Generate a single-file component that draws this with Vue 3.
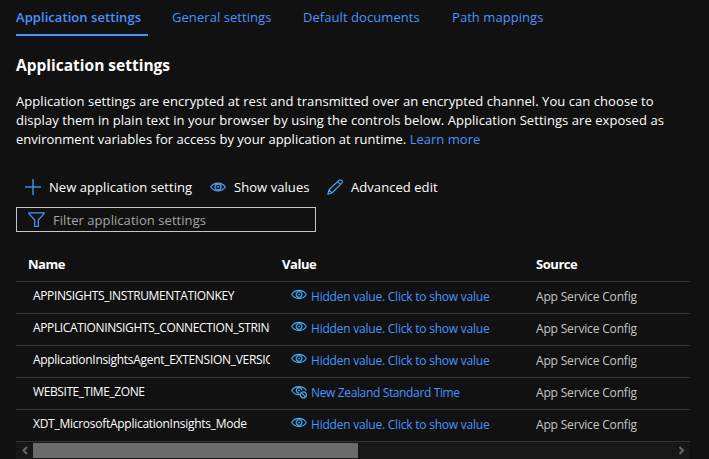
<script setup>
const tabs = [
  { label: 'Application settings', cls: 'tab-app', active: true },
  { label: 'General settings', cls: 'tab-general' },
  { label: 'Default documents', cls: 'tab-docs' },
  { label: 'Path mappings', cls: 'tab-path' },
]
const rows = [
  { name: 'APPINSIGHTS_INSTRUMENTATIONKEY', cls: 'n-key' },
  { name: 'APPLICATIONINSIGHTS_CONNECTION_STRING', cls: 'n-conn' },
  { name: 'ApplicationInsightsAgent_EXTENSION_VERSION', cls: 'n-agent' },
  { name: 'WEBSITE_TIME_ZONE', cls: 'n-zone', value: 'New Zealand Standard Time' },
  { name: 'XDT_MicrosoftApplicationInsights_Mode', cls: 'n-mode' },
]
</script>

<template>
  <main class="page">
    <nav class="tabs">
      <a v-for="t in tabs" :key="t.label" class="tab" :class="[t.cls, { active: t.active }]"><span>{{ t.label }}</span></a>
    </nav>
    <h1 class="title">Application settings</h1>
    <p class="intro">
      <span class="line">Application settings are encrypted at rest and transmitted over an encrypted channel. You can choose to</span>
      <span class="line">display them in plain text in your browser by using the controls below. Application Settings are exposed as</span>
      <span class="line l3">environment variables for access by your application at runtime. <a class="link">Learn more</a></span>
    </p>
    <div class="toolbar">
      <button class="cmd cmd-new">
        <svg width="16" height="16" viewBox="0 0 16 16"><path d="M8 0v16M0 8h16" stroke="#3f8bdc" stroke-width="1.5" fill="none" /></svg>
        <span>New application setting</span>
      </button>
      <button class="cmd cmd-show">
        <svg width="16" height="16" viewBox="0 0 16 16" fill="none" stroke="#4a9ff0" stroke-width="1.3"><path d="M.7 8C4.200 2.800 11.800 2.800 15.300 8C11.800 13.200 4.200 13.200.7 8Z" /><circle cx="8" cy="8" r="3" /><circle cx="8" cy="8" r="1" fill="#4a9ff0" stroke="none" /></svg>
        <span>Show values</span>
      </button>
      <button class="cmd cmd-edit">
        <svg width="16" height="16" viewBox="0 0 16 16" fill="none" stroke="#4a9ff0" stroke-width="1.2" stroke-linejoin="round"><path d="M.8 15.200L2 10.800L12 1.300Q13.300.2 14.700 1.400Q15.900 2.800 14.800 4.100L5 14L.8 15.200ZM2 10.800L5 14M10.700 2.600L13.500 5.400" /></svg>
        <span>Advanced edit</span>
      </button>
    </div>
    <div class="filter">
      <svg width="17" height="16" viewBox="0 0 17 16" fill="none" stroke="#4894fe" stroke-width="1.3"><path d="M.9.9H16.100V1.600L10.300 8V14.300H6.700V8L.9 1.600Z" /></svg>
      <span>Filter application settings</span>
    </div>
    <section class="table">
      <div class="row head"><span>Name</span><span>Value</span><span>Source</span></div>
      <div v-for="r in rows" :key="r.name" class="row">
        <div class="name"><span :class="r.cls">{{ r.name }}</span></div>
        <div class="value">
          <svg width="16" height="14" viewBox="0 0 16 14" fill="none" stroke="#4ba5ea" stroke-width="1.2">
            <template v-if="r.value">
              <path d="M9 9.500C5.700 10.100 2.500 8.500.7 5.500C4 .3 12 .3 15.300 5.500M8.300 8.100A2.700 2.700 0 1 1 10.700 5.500" />
              <circle cx="12.400" cy="9.800" r="3" /><path d="M10.300 7.700L14.500 11.900" />
            </template>
            <path v-else d="M.7 5.500C4 .1 12 .1 15.300 5.500C12 10.900 4 10.900.7 5.500Z" />
            <circle v-if="!r.value" cx="8" cy="5.500" r="2.800" />
            <circle cx="8" cy="5.500" r=".9" fill="#4ba5ea" stroke="none" />
          </svg>
          <span :class="r.value ? 'zone' : 'hidden-value'">{{ r.value || 'Hidden value. Click to show value' }}</span>
        </div>
        <div class="source">App Service Config</div>
      </div>
      <div class="scrollbar">
        <svg width="17" height="17" viewBox="0 0 17 17"><path d="M11 5L7.500 8.500L11 12" /></svg>
        <div class="track"><div class="thumb"></div></div>
        <svg width="17" height="17" viewBox="0 0 17 17"><path d="M6.500 5L10 8.500L6.500 12" /></svg>
      </div>
    </section>
  </main>
</template>

<style>
body { background: #111; }
</style>

<style scoped>
.page {
  box-sizing: border-box;
  width: 709px;
  height: 459px;
  padding-left: 16px;
  overflow: hidden;
  background: #111;
  color: #fff;
  font-family: "Open Sans", "Noto Sans", sans-serif;
  font-size: 13px;
  letter-spacing: 0.06px;
  white-space: nowrap;
}
svg { flex: none; display: block; }
.tabs { display: flex; height: 36px; color: #4894fe; }
.tab { box-sizing: border-box; height: 36px; line-height: 19px; padding-top: 8px; }
.tab-app { width: 132px; margin-right: 24px; }
.tab-general { width: 131px; }
.tab-docs { width: 149px; }
.tab.active { font-weight: 600; border-bottom: 2px solid #4894fe; }
.title { margin: 18px 0 0; font-size: 15.5px; letter-spacing: 0; line-height: 22px; font-weight: 700; }
.intro { margin: 16px 0 0; line-height: 19px; }
.line { display: block; }
.l3 { letter-spacing: 0.02px; }
.link { color: #4894fe; }
.toolbar { display: flex; margin-top: 28px; height: 20px; padding-left: 9px; }
.cmd { display: flex; align-items: center; gap: 8px; border: 0; padding: 0; background: none; color: inherit; font: inherit; letter-spacing: inherit; line-height: 20px; white-space: nowrap; }
.cmd-new { width: 185px; }
.cmd-show { width: 117px; }
.filter { box-sizing: border-box; display: flex; gap: 8px; margin-top: 10px; width: 300px; height: 25px; border: 1px solid #c8c6c4; padding: 4px 0 0 11px; color: #a6a4a2; line-height: 17px; }
.table { width: 674px; margin-top: 17px; }
.row { box-sizing: border-box; display: grid; grid-template-columns: 254px 254px 1fr; height: 32px; padding-left: 12px; border-bottom: 1px solid #343434; font-size: 12px; line-height: 16px; }
.row.head { height: 33px; border-color: #2d3138; padding-top: 6px; font-size: 13px; letter-spacing: -0.45px; line-height: 19px; font-weight: 700; }
.name { width: 237px; padding: 6px 0 0 5px; overflow: hidden; }
.n-key, .n-conn { letter-spacing: -0.36px; }
.n-agent { letter-spacing: -0.3px; }
.n-zone { letter-spacing: -0.41px; }
.n-mode { letter-spacing: -0.27px; }
.value { display: flex; gap: 4px; padding: 7px 0 0 9px; color: #4894fe; }
.hidden-value { letter-spacing: -0.22px; }
.zone { letter-spacing: -0.36px; }
.source { padding-top: 7px; color: #c8c6c4; letter-spacing: -0.17px; }
.scrollbar { display: flex; align-items: center; height: 17px; background: #171717; }
.scrollbar path { stroke: #686868; stroke-width: 2; fill: none; }
.track { flex: 1; }
.thumb { width: 325px; height: 15px; background: #6b6b6b; }
</style>
